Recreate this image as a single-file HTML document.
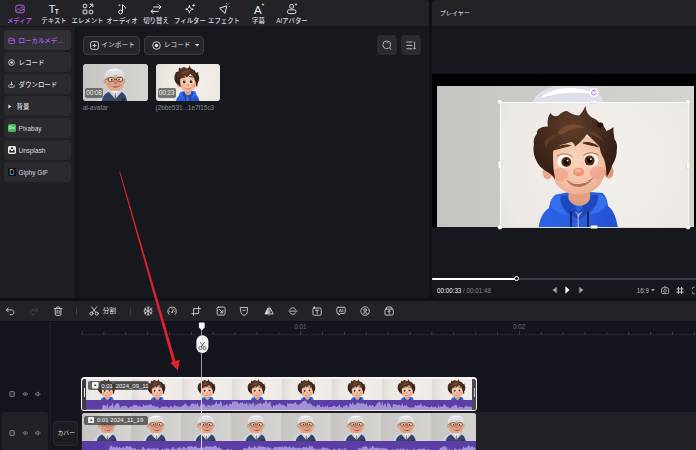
<!DOCTYPE html>
<html lang="ja">
<head>
<meta charset="utf-8">
<title>Video Editor</title>
<style>
*{box-sizing:border-box;margin:0;padding:0}
html,body{width:696px;height:450px;overflow:hidden;background:#111115}
body{position:relative;font-family:"Liberation Sans","Noto Sans CJK JP",sans-serif;color:#e6e6ea;font-size:6.4px;line-height:1}
.abs{position:absolute}
#media{position:absolute;left:0;top:0;width:429px;height:298px;background:#17181d;border-radius:0 4px 4px 0;overflow:hidden}
#player{position:absolute;left:432px;top:0;width:264px;height:298px;background:#17181d;border-radius:4px 0 0 4px;overflow:hidden}
.topbar{position:absolute;left:0;top:0;right:0;height:26px;background:#232327}
.tab{position:absolute;top:0;width:40px;height:26px;text-align:center;color:#dcdce0}
.tab svg{position:absolute;left:14px;top:3px;width:12px;height:12px;overflow:visible}
.tab span{font-weight:500;position:absolute;left:-10px;right:-10px;top:17.7px;font-size:6.4px;white-space:nowrap;letter-spacing:0}
.tab.on span{color:#b65cf2}
#side{position:absolute;left:0;top:26px;width:76.2px;height:272px;background:#1f1f24;border-right:1.5px solid #111115;border-top:1px solid #18181c}
.si{position:absolute;left:4px;width:67px;height:20px;border-radius:4px;background:#2a2a2f;font-size:6.45px;color:#dedee2;white-space:nowrap}
.si span{font-weight:500;position:absolute;left:14.6px;top:8.1px}
.si svg{position:absolute;left:4.3px;top:7.1px;width:7px;height:7px;overflow:visible}
.si.on{background:#313136;color:#b65cf2}
.btn{position:absolute;top:35.5px;height:19.5px;border:1px solid #3a3a40;border-radius:4px;background:#26262a;font-size:6.6px;color:#dedee2}
.sq{position:absolute;top:35px;width:20.5px;height:20px;border-radius:4px;background:#2a2a2f}
.thumb{position:absolute;top:64px;width:64.5px;height:37px;border-radius:3.5px;overflow:hidden;background:#d6d3ce}
.dur{position:absolute;left:2px;bottom:2.6px;width:18px;height:10px;border-radius:1.8px;background:rgba(88,88,88,.8);color:#ececec;font-size:6.5px;text-align:center;line-height:10.4px;letter-spacing:-.2px}
.cap{position:absolute;top:104.6px;font-size:6.4px;color:#8a8a92;white-space:nowrap}
#tbar{position:absolute;left:0;top:301px;width:696px;height:19.8px;background:#232327}
#tl{position:absolute;left:0;top:322px;width:696px;height:128px;background:#15161d;overflow:hidden}
.ti{position:absolute;top:5.1px;width:10.2px;height:10.2px;margin-left:.4px;overflow:visible}
</style>
</head>
<body>

<svg width="0" height="0" style="position:absolute">
<defs>
<radialGradient id="bgB" gradientUnits="userSpaceOnUse" cx="105" cy="60" r="150"><stop offset="0" stop-color="#f3f0ec"/><stop offset="0.7" stop-color="#ece9e4"/><stop offset="1" stop-color="#dedbd6"/></radialGradient>
<linearGradient id="bgO" gradientUnits="userSpaceOnUse" x1="0" x2="188" y1="0" y2="0"><stop offset="0" stop-color="#c6c4c0"/><stop offset="0.5" stop-color="#cfcdc9"/><stop offset="1" stop-color="#d6d4d0"/></linearGradient>
<linearGradient id="hoodG" gradientUnits="userSpaceOnUse" x1="40" x2="118" y1="95" y2="125"><stop offset="0" stop-color="#2c62e6"/><stop offset="0.5" stop-color="#2a5ee0"/><stop offset="1" stop-color="#2250cc"/></linearGradient>
<radialGradient id="skinG" gradientUnits="userSpaceOnUse" cx="76" cy="58" r="40"><stop offset="0" stop-color="#fad4ba"/><stop offset="0.6" stop-color="#f4c2a6"/><stop offset="1" stop-color="#e6a486"/></radialGradient>
<radialGradient id="hairG" gradientUnits="userSpaceOnUse" cx="72" cy="26" r="52"><stop offset="0" stop-color="#623e2a"/><stop offset="0.5" stop-color="#482c1e"/><stop offset="1" stop-color="#341e16"/></radialGradient>
<g id="boy">
  <rect x="-70" y="-20" width="330" height="170" fill="url(#bgB)"/>
  <!-- hoodie body -->
  <path d="M38.500 126 C40 116 43 110 49 106 C50 100 52 95 56 92.500 L70 90 L90 90 L102.500 91 C106 94 107.500 99 108 104 C113 108 116 114 118 126 Z" fill="url(#hoodG)"/>
  <!-- hood inner shadow -->
  <path d="M60 94 C64 92 68 94 70 97 L78.700 111 L88 96.500 C91 93 96 92 100 94 C98 100 94 106 88 111 L79 118 L68 111 C63 106 60 100 60 94 Z" fill="#1d48be"/>
  <path d="M74.500 109 L78.700 115 L83 109 L78.700 111.500 Z" fill="#8c9ebc"/>
  <!-- neck -->
  <path d="M68.500 84 H90 V97 C86 106 73 106 68.500 97 Z" fill="#e2a080"/>
  <!-- hood rim highlights -->
  <path d="M50 101 C52 95 56 92 61 93 C59 100 62 108 68 113 C62 113 54 110 50 101 Z" fill="#3470ee"/>
  <path d="M107 101 C106 95 102 91.500 98 92.500 C99 100 95 107 89 112 C96 112 104 109 107 101 Z" fill="#3470ee"/>
  <!-- ears -->
  <ellipse cx="47.500" cy="71" rx="4.800" ry="6.500" fill="#eaa88a"/>
  <ellipse cx="109" cy="70" rx="4.500" ry="6.500" fill="#e09878"/>
  <!-- face -->
  <path d="M52 52 C52 40 62 34 78 34 C94 34 105.500 40 106 54 C107 64 105 74 101 81 C96 88 88 92.500 78.700 92.500 C69 92.500 61 88 56 82 C52 75 51.500 62 52 52 Z" fill="url(#skinG)"/>
  <ellipse cx="60" cy="72.500" rx="8.500" ry="6.500" fill="#f08878" opacity="0.42"/>
  <ellipse cx="98" cy="71" rx="8.500" ry="6.500" fill="#f08878" opacity="0.42"/>
  <!-- eyes -->
  <ellipse cx="64.700" cy="59.400" rx="7.300" ry="6.800" fill="#fbf7f4"/><ellipse cx="91" cy="58" rx="7.300" ry="6.800" fill="#fbf7f4"/>
  <circle cx="66.300" cy="60" r="5" fill="#5a2c14"/><circle cx="89.600" cy="58.600" r="5" fill="#5a2c14"/>
  <circle cx="66.300" cy="60" r="2.700" fill="#120704"/><circle cx="89.600" cy="58.600" r="2.700" fill="#120704"/>
  <circle cx="67.600" cy="58.600" r="0.900" fill="#fff"/><circle cx="90.900" cy="57.200" r="0.900" fill="#fff"/>
  <path d="M57 54.500 C60 51 69 51 72.500 55" stroke="#8a5a44" stroke-width="0.800" fill="none"/>
  <path d="M83.500 53.500 C87 50 95 50 98.500 53.500" stroke="#8a5a44" stroke-width="0.800" fill="none"/>
  <!-- brows -->
  <path d="M55 47.500 C59 43.500 66 42.500 70.500 43.500 C66 44.500 60 46 55 47.500 Z" fill="#4a2c1a" stroke="#4a2c1a" stroke-width="1.200"/>
  <path d="M83 41 C88 40 94 41.500 98.500 45 C93.500 43.500 88 42.500 83 41 Z" fill="#4a2c1a" stroke="#4a2c1a" stroke-width="1.200"/>
  <!-- nose + mouth -->
  <ellipse cx="78.700" cy="70" rx="5.600" ry="4.300" fill="#ee9478"/>
  <ellipse cx="78" cy="68.600" rx="3" ry="1.800" fill="#f6b49a"/>
  <path d="M66 77.500 C72 82.500 86 82 93.500 75.500 C89 82.500 83 85 78.700 85 C73 85 68.500 82 66 77.500 Z" fill="#c06a58"/>
  <path d="M68.500 79.500 C74 83 85 82.500 91 77.800 C86 81 73 82 68.500 79.500 Z" fill="#fdf6f0"/>
  <!-- hair -->
  <path d="M55 77 C53 73.500 50 71.500 46.500 69.500 C42 67 38 63 36 58 C33.500 53 33 46 34 42 C33 38 35 34 37 31.500 C36 27 42 24 48 24.500 C47 20 48 14 50.500 11 C52 14 55 15 58.500 13.500 C61 11 64 9 67 9 C70 11 74 13.500 79 13.500 C81.500 11.500 84 7.500 85.700 3.400 C85.600 8 87.500 12.500 92 15.500 C96 17 98 19 99.500 21 C102 20 104 21.500 103.500 24 C105 26 106 27.500 106 29 C109 28 112 26.500 113.600 25 C113 29 114 33 114.500 37 C117 40 117.500 44 116.800 48 C117 53 115 59 112 63.500 C111 68 109 72 106.500 75 C106.500 68 105.500 61 104 57 C101 52 100 48 99.500 44.500 C96 41 93.500 38.500 92 37 C90 35 88 33 87 32 C84 36 80 41 75 44.500 C74.500 42 73 40.500 71.500 40 C67 41 63 42.500 60.500 43 C57.500 45 55 47 53 49.500 C53 58 53 68 55 76 Z" fill="url(#hairG)"/>
  <path d="M58 30 C64 22 76 20 86 26 C80 25 72 26 66 30 C62 33 58 34 58 30 Z" fill="#8a5c3c" opacity="0.550"/>
  <path d="M88 30 C94 28 100 32 104 40 C100 36 94 34 88 30 Z" fill="#7a5034" opacity="0.500"/>
  <path d="M44 40 C48 34 54 32 58 34 C52 36 48 40 46 46 Z" fill="#7a5034" opacity="0.450"/>
  <ellipse cx="100" cy="23" rx="3" ry="2.400" fill="#241610"/>
  <!-- strings + zipper -->
  <path d="M71 109.500 V126 M88 109.500 V126" stroke="#1a1a28" stroke-width="1.500"/>
  <path d="M78.200 113 V126" stroke="#b8c2d4" stroke-width="1.100"/>
</g>
<g id="oldman">
  <rect x="-60" y="-30" width="320" height="170" fill="url(#bgO)"/>
  <!-- shirt + vest -->
  <path d="M46 106 C48 92 56 82 70 78 L82 72 L106 72 L118 78 C128 82 132 92 134 106 Z" fill="#cdd4e0"/>
  <path d="M56 106 C58 92 64 84 76 80 L94 100 L112 80 C122 84 126 94 128 106 Z" fill="#36466a"/>
  <path d="M84 74 L94 92 L104 74 Z" fill="#f6f8fb"/>
  <path d="M93 82 L95 82 L96 100 L92 100 Z" fill="#8a5a5a"/>
  <rect x="112" y="98" width="10" height="8" fill="#3a2c24"/>
  <!-- neck -->
  <rect x="82" y="64" width="22" height="12" fill="#d8a488"/>
  <!-- ears -->
  <ellipse cx="65" cy="50" rx="4.500" ry="7" fill="#d89c82"/>
  <ellipse cx="119" cy="49" rx="4" ry="6.500" fill="#d0947a"/>
  <!-- face -->
  <path d="M68 40 C68 22 116 22 118 40 C120 52 119 62 114 69 C108 79 80 79 73 69 C67 62 67 52 68 40 Z" fill="#e0a688"/>
  <ellipse cx="79" cy="57" rx="6.500" ry="4.500" fill="#e48a7a" opacity="0.6"/>
  <ellipse cx="107" cy="56" rx="6.500" ry="4.500" fill="#e48a7a" opacity="0.6"/>
  <!-- hair -->
  <path d="M66 45 C62 34 64 22 74 17 C84 11 106 11 112 17 C120 22 121 34 118 44 C116 36 112 31 104 30 C96 32 86 33 78 31 C72 34 68 39 66 45 Z" fill="#dde0e8"/>
  <path d="M72 22 C82 13 102 13 112 20 C102 17 88 18 72 22 Z" fill="#ffffff"/>
  <!-- glasses -->
  <rect x="74" y="39" width="17" height="11" rx="4" fill="#eccab2" stroke="#2a2420" stroke-width="1.800"/>
  <rect x="98" y="38.500" width="17" height="11" rx="4" fill="#eccab2" stroke="#2a2420" stroke-width="1.800"/>
  <path d="M91 44 H98 M74 43 L66 44" stroke="#2a2420" stroke-width="1.500"/>
  <circle cx="84" cy="45" r="2.400" fill="#3a2a20"/><circle cx="105" cy="44.500" r="2.400" fill="#3a2a20"/>
  <path d="M74 36 C78 32.500 87 32.500 91 36" stroke="#eef0f4" stroke-width="2.800" fill="none"/>
  <path d="M98 35.500 C102 32 111 32 115 35.500" stroke="#eef0f4" stroke-width="2.800" fill="none"/>
  <!-- nose / mouth -->
  <ellipse cx="95" cy="54" rx="6" ry="5" fill="#dc7866"/>
  <path d="M82 62 C88 69 104 69 110 61 C104 65 88 66 82 62 Z" fill="#8a3c30"/>
</g>
</defs>
</svg>

<!-- ================= MEDIA PANEL ================= -->
<div id="media">
  <div class="topbar" id="tabs">
<div class="tab on" style="left:-0.5px"><svg viewBox="0 0 12 12" style="transform:scale(.88);transform-origin:50% 50%"><rect x="1.2" y="1.6" width="9.6" height="8.8" rx="2.2" fill="none" stroke="#b65cf2" stroke-width="1.1"/><circle cx="8" cy="4.3" r="0.9" fill="none" stroke="#b65cf2" stroke-width="0.8"/><path d="M1.6 8.2 L4.6 5.4 L6.6 7.4 M5.2 10 C6 8 8 6.6 10.6 6.4" fill="none" stroke="#b65cf2" stroke-width="1"/></svg><span>メディア</span></div>
<div class="tab" style="left:34px"><svg viewBox="0 0 12 12"><text x="0.6" y="10" font-size="11.5" font-family="Liberation Sans,sans-serif" fill="#e8e8ec">T</text><text x="6.8" y="10.6" font-size="6.6" font-weight="bold" font-family="Liberation Sans,sans-serif" fill="#e8e8ec">T</text></svg><span>テキスト</span></div>
<div class="tab" style="left:67.5px"><svg viewBox="0 0 12 12"><circle cx="3" cy="3" r="1.9" fill="none" stroke="#e8e8ec" stroke-width="1"/><rect x="1.1" y="7" width="3.8" height="3.8" rx="0.6" fill="none" stroke="#e8e8ec" stroke-width="1"/><circle cx="9" cy="9" r="1.9" fill="none" stroke="#e8e8ec" stroke-width="1"/><path d="M7 5 L10.6 1.4 M7.8 1.2 H10.8 V4.2" fill="none" stroke="#e8e8ec" stroke-width="1"/></svg><span>エレメント</span></div>
<div class="tab" style="left:102px"><svg viewBox="0 0 12 12"><circle cx="4.6" cy="9" r="1.9" fill="none" stroke="#e8e8ec" stroke-width="1"/><path d="M6.5 9 V1.6 C7.2 3 9.6 3 9.4 5.6" fill="none" stroke="#e8e8ec" stroke-width="1"/><path d="M3.4 1.2 v2 M2.4 2.2 h2" stroke="#e8e8ec" stroke-width="0.6"/></svg><span>オーディオ</span></div>
<div class="tab" style="left:136px"><svg viewBox="0 0 12 12"><path d="M3.4 4 H10.8 M8.6 1.6 L11 4 L8.6 6.2" fill="none" stroke="#e8e8ec" stroke-width="1"/><path d="M8.6 8.4 H1.2 M3.4 6.2 L1 8.4 L3.4 10.8" fill="none" stroke="#e8e8ec" stroke-width="1"/></svg><span>切り替え</span></div>
<div class="tab" style="left:170px"><svg viewBox="0 0 12 12"><path d="M5.4 2.4 C5.8 5 6.6 5.8 9.2 6.2 C6.6 6.6 5.8 7.4 5.4 10.2 C5 7.4 4.2 6.6 1.6 6.2 C4.2 5.8 5 5 5.4 2.4 Z" fill="none" stroke="#e8e8ec" stroke-width="0.95" stroke-linejoin="round"/><path d="M9.6 0.6 C9.8 1.8 10.2 2.2 11.4 2.4 C10.2 2.6 9.8 3 9.6 4.2 C9.4 3 9 2.6 7.8 2.4 C9 2.2 9.4 1.8 9.6 0.6 Z" fill="#e8e8ec"/></svg><span>フィルター</span></div>
<div class="tab" style="left:204px"><svg viewBox="0 0 12 12"><path d="M1.6 5.2 L8.8 2.8 L7 10.4 Z" fill="none" stroke="#e8e8ec" stroke-width="1" stroke-linejoin="round"/><path d="M10.2 1.4 l0.6 -0.8 M10.8 3.6 l1 0 M8.4 0.8 l0 -0.8" stroke="#e8e8ec" stroke-width="0.7"/></svg><span>エフェクト</span></div>
<div class="tab" style="left:238.5px"><svg viewBox="0 0 12 12"><text x="1" y="10.6" font-size="11.5" font-family="Liberation Sans,sans-serif" fill="#e8e8ec">A</text><path d="M10 0.4 v2.4 M8.8 1.6 h2.4" stroke="#e8e8ec" stroke-width="0.7"/></svg><span>字幕</span></div>
<div class="tab" style="left:272px"><svg viewBox="0 0 12 12"><circle cx="5.6" cy="3.4" r="2" fill="none" stroke="#e8e8ec" stroke-width="1"/><rect x="1.4" y="6.8" width="8.6" height="3.8" rx="1.9" fill="none" stroke="#e8e8ec" stroke-width="1"/><path d="M10 0.2 v2.4 M8.8 1.4 h2.4" stroke="#e8e8ec" stroke-width="0.7"/></svg><span>AIアバター</span></div>
</div>
  <div id="side">
<div class="si on" style="top:2.7px"><svg viewBox="0 0 8 8"><path d="M1 2.2 C1 1.5 1.4 1.2 2 1.2 H3.6 L4.4 2.2 H6.6 C7.2 2.2 7.6 2.6 7.6 3.2 V6.4 C7.6 7 7.2 7.4 6.6 7.4 H2 C1.4 7.4 1 7 1 6.4 Z M1 3.8 H7.6" fill="none" stroke="#b65cf2" stroke-width="0.9"/></svg><span>ローカルメデ…</span></div>
<div class="si" style="top:24.7px"><svg viewBox="0 0 8 8"><circle cx="4" cy="4" r="3.3" fill="none" stroke="#e2e2e6" stroke-width="0.9"/><circle cx="4" cy="4" r="1.5" fill="#e2e2e6"/></svg><span>レコード</span></div>
<div class="si" style="top:46.7px"><svg viewBox="0 0 8 8"><path d="M4 0.8 V4.8 M2.4 3.4 L4 5 L5.6 3.4" fill="none" stroke="#e2e2e6" stroke-width="0.9"/><path d="M0.9 4.4 V6 C0.9 6.8 1.4 7.2 2.1 7.2 H5.9 C6.6 7.2 7.1 6.8 7.1 6 V4.4" fill="none" stroke="#e2e2e6" stroke-width="0.9"/></svg><span>ダウンロード</span></div>
<div class="si" style="top:68.7px"><svg viewBox="0 0 8 8" style="left:3.4px;top:7.2px"><path d="M1.6 1.6 L5 4 L1.6 6.4 Z" fill="#e2e2e6"/></svg><span style="left:12.5px">背景</span></div>
<div class="si" style="top:90.7px"><svg viewBox="0 0 8 8" style="left:3.9px;top:6.7px;width:8px;height:8px"><rect x="0" y="0" width="8" height="8" rx="1.6" fill="#48b85a"/><path d="M1.6 5.6 V2.6 H3.2 C4.2 2.6 4.2 4.4 3.2 4.4 H1.6 M4.6 2.6 L6.6 5.2 M6.6 2.6 L4.6 5.2" fill="none" stroke="#d8f5dc" stroke-width="0.7"/></svg><span>Pixabay</span></div>
<div class="si" style="top:112.7px"><svg viewBox="0 0 8 8" style="left:3.9px;top:6.7px;width:8px;height:8px"><rect x="0" y="0" width="8" height="8" rx="1.8" fill="#f2f2f2"/><path d="M2.8 1.6 H5.2 V3 H2.8 Z M1.4 3.8 H2.8 V5 H5.2 V3.8 H6.6 V6.6 H1.4 Z" fill="#18181c"/></svg><span>Unsplash</span></div>
<div class="si" style="top:134.7px"><svg viewBox="0 0 8 8" style="left:3.9px;top:6.7px;width:8px;height:8px"><rect x="0" y="0" width="8" height="8" rx="1.6" fill="#0c0c0e"/><path d="M2.2 1.6 V6.4" stroke="#28e08a" stroke-width="0.9"/><path d="M2.2 1.6 H4.6" stroke="#ffe14a" stroke-width="0.9"/><path d="M4.6 1.6 L5.8 3" stroke="#ff6666" stroke-width="0.9"/><path d="M5.8 3 V6.4" stroke="#a050ff" stroke-width="0.9"/><path d="M2.2 6.4 H5.8" stroke="#30b0ff" stroke-width="0.9"/></svg><span>Giphy GIF</span></div>
</div>
  <div id="content">
<div class="btn" style="left:83px;width:56.5px"><svg class="abs" style="left:6px;top:4.5px;width:9px;height:9px" viewBox="0 0 9 9"><rect x="0.6" y="0.6" width="7.8" height="7.8" rx="1.8" fill="none" stroke="#dedee2" stroke-width="0.9"/><path d="M4.5 2.6 V6.4 M2.6 4.5 H6.4" stroke="#dedee2" stroke-width="0.9"/></svg><span class="abs" style="left:17.3px;top:5.8px;font-size:6.75px">インポート</span></div>
<div class="btn" style="left:144.2px;width:60.3px"><svg class="abs" style="left:6.5px;top:4.5px;width:9px;height:9px" viewBox="0 0 9 9"><circle cx="4.5" cy="4.5" r="3.8" fill="none" stroke="#dedee2" stroke-width="0.9"/><circle cx="4.5" cy="4.5" r="1.7" fill="#dedee2"/></svg><span class="abs" style="left:18.8px;top:5.8px">レコード</span><svg class="abs" style="left:49.7px;top:7.7px;width:4.2px;height:2.6px" viewBox="0 0 5 3"><path d="M0 0 H5 L2.5 3 Z" fill="#dedee2"/></svg></div>
<div class="sq" style="left:376.5px"><svg class="abs" style="left:5px;top:5px;width:10px;height:10px" viewBox="0 0 10 10"><circle cx="4.8" cy="4.8" r="3.9" fill="none" stroke="#c8c8ce" stroke-width="0.8"/><path d="M7.4 7.6 L9.2 9.6" stroke="#c8c8ce" stroke-width="0.9"/><path d="M6.6 3.6 A2.4 2.4 0 0 0 4.4 2.4" fill="none" stroke="#c8c8ce" stroke-width="0.6"/></svg></div>
<div class="sq" style="left:400.5px"><svg class="abs" style="left:5.5px;top:5.5px;width:10px;height:9px" viewBox="0 0 10 9"><path d="M0.4 1 H6.4 M0.4 4.4 H6.4 M0.4 7.8 H6.4" stroke="#c8c8ce" stroke-width="0.9"/><path d="M8.6 0.6 V8 M7.4 6.8 L8.6 8.2 L9.8 6.8" fill="none" stroke="#c8c8ce" stroke-width="0.8"/></svg></div>
<div class="thumb" style="left:83px"><svg class="abs" style="left:0;top:0" width="64.5" height="37" viewBox="0 0 188 106" preserveAspectRatio="xMidYMid slice"><use href="#oldman"/></svg><div class="dur">00:08</div></div>
<div class="thumb" style="left:155.5px"><svg class="abs" style="left:0;top:0" width="64.5" height="37" viewBox="-29.5 -1 219.3 124.7" preserveAspectRatio="xMidYMid slice"><use href="#boy"/></svg><div class="dur">00:23</div></div>
<div class="cap" style="left:83px">ai-avatar</div>
<div class="cap" style="left:155.5px">(2bbe531...1e7f15c3</div>
</div>
</div>

<!-- ================= PLAYER PANEL ================= -->
<div id="player">
  <div class="topbar"><span class="abs" style="left:7.7px;top:9.6px;font-size:6.1px;color:#e2e2e6">プレイヤー</span></div>
  <div id="stage">
<div class="abs" style="left:0;top:74px;width:264px;height:153px;background:#000"></div>
<svg class="abs" style="left:5.3px;top:85.7px" width="256.4" height="141.3" viewBox="-4 13.5 188 103.6" preserveAspectRatio="xMidYMid slice"><use href="#oldman"/></svg>
<svg class="abs" style="left:68px;top:102px" width="188" height="125" viewBox="0 0 188 125"><use href="#boy"/></svg>
<div class="abs" style="left:67.5px;top:101.5px;width:189px;height:126px;border:1px solid rgba(255,255,255,.85)"></div>
<svg class="abs" style="left:0;top:0;overflow:visible" width="264" height="298" viewBox="0 0 264 298">
  <g fill="#fff" stroke="#b8b8b8" stroke-width="0.4">
    <circle cx="68" cy="102" r="2.3"/><circle cx="256" cy="102" r="2.3"/><circle cx="68" cy="227" r="2.3"/><circle cx="256" cy="227" r="2.3"/>
    <rect x="158.500" y="100.600" width="7" height="2.800" rx="1"/><rect x="158.500" y="225.600" width="7" height="2.800" rx="1"/>
    <rect x="66.300" y="161" width="3.400" height="7.400" rx="1"/><rect x="254.300" y="161" width="3.400" height="7.400" rx="1"/>
  </g>
  <circle cx="162" cy="92.600" r="4.600" fill="#fff"/>
  <path d="M164.200 92.700 A2.300 2.300 0 1 1 162.600 90.500" fill="none" stroke="#b65cf2" stroke-width="0.9"/>
  <path d="M161.600 89.300 L163.600 90.500 L162 92" fill="none" stroke="#b65cf2" stroke-width="0.8"/>
</svg>
</div>
  <div id="controls">
<div class="abs" style="left:0;top:277.5px;width:264px;height:2px;background:#3a3a42"></div>
<div class="abs" style="left:0;top:277.5px;width:84px;height:2px;background:#fff;border-radius:1px"></div>
<div class="abs" style="left:81.600px;top:276px;width:5px;height:5px;border-radius:50%;background:#17181d;border:1px solid #fff"></div>
<span class="abs" style="left:5px;top:288.300px;font-size:6.250px;color:#f0f0f4;white-space:nowrap;transform:scaleY(1.18);transform-origin:0 50%">00:00:33 <span style="color:#85858e">/ 00:01:48</span></span>
<svg class="abs" style="left:118px;top:285px;overflow:visible" width="36" height="10" viewBox="0 0 36 10">
  <path d="M6.200 2.200 L2.600 5 L6.200 7.800 Z" fill="#b0b0b8"/><rect x="5.600" y="2.200" width="1.600" height="5.600" fill="#74747c"/>
  <path d="M15.400 1.200 L19.600 5 L15.400 8.800 Z" fill="#f4f4f8"/>
  <path d="M29.800 2.200 L33.400 5 L29.800 7.800 Z" fill="#b0b0b8"/><rect x="28.800" y="2.200" width="1.600" height="5.600" fill="#74747c"/>
</svg>
<span class="abs" style="left:204.800px;top:288px;font-size:6.200px;color:#b8b8c0;transform:scaleY(1.18);transform-origin:0 50%">16:9</span>
<svg class="abs" style="left:218.600px;top:289.300px" width="4" height="2.600" viewBox="0 0 4 2.600"><path d="M0 0 H4 L2 2.600 Z" fill="#a0a0a8"/></svg>
<svg class="abs" style="left:229px;top:285.500px;overflow:visible" width="36" height="9" viewBox="0 0 36 9">
  <rect x="0.600" y="1.800" width="7" height="5.800" rx="1.200" fill="none" stroke="#b8b8c0" stroke-width="0.9"/><circle cx="4.100" cy="4.800" r="1.400" fill="none" stroke="#b8b8c0" stroke-width="0.8"/><path d="M2.800 1.600 L3.400 0.700 H4.800 L5.400 1.600" fill="none" stroke="#b8b8c0" stroke-width="0.7"/>
  <path d="M17.400 1 V8 M20.600 1 V8 M15.600 2.900 H22.400 M15.600 6.100 H22.400" stroke="#c8c8d0" stroke-width="1"/>
  <path d="M31.400 3.200 V2.400 C31.400 1.600 31.800 1.200 32.600 1.200 H33.600 M31.400 5.800 V6.600 C31.400 7.400 31.800 7.800 32.600 7.800 H33.600" fill="none" stroke="#b8b8c0" stroke-width="0.9"/>
</svg>
</div>
</div>

<!-- ================= TIMELINE TOOLBAR ================= -->
<div id="tbar">
<svg class="ti" style="left:5.1px" viewBox="0 0 11 11" fill="none" stroke="#dcdce2" stroke-width="0.9" stroke-linecap="round" stroke-linejoin="round"><path d="M3.6 2 L1.4 4.200 L3.600 6.400 M1.600 4.200 H6.800 C8.600 4.200 9.600 5.400 9.600 6.800 C9.600 8.200 8.600 9.400 6.800 9.400 H5.400"/></svg>
<svg class="ti" style="left:28.5px" viewBox="0 0 11 11" fill="none" stroke="#4c4c54" stroke-width="0.9" stroke-linecap="round" stroke-linejoin="round"><path d="M7.400 2 L9.600 4.200 L7.400 6.400 M9.400 4.200 H4.200 C2.400 4.200 1.400 5.400 1.400 6.800 C1.400 8.200 2.400 9.400 4.200 9.400 H5.600"/></svg>
<svg class="ti" style="left:52.8px" viewBox="0 0 11 11" fill="none" stroke="#dcdce2" stroke-width="0.9" stroke-linecap="round" stroke-linejoin="round"><path d="M1.400 2.800 H9.600 M4 2.600 V1.600 C4 1.200 4.200 1 4.600 1 H6.400 C6.800 1 7 1.200 7 1.600 V2.600 M2.400 3 V8.600 C2.400 9.600 3 10.200 4 10.200 H7 C8 10.200 8.600 9.600 8.600 8.600 V3 M4.400 4.800 V8 M6.600 4.800 V8"/></svg>
<div class="abs" style="left:75.700px;top:6.500px;width:0.800px;height:7.500px;background:#3e3e46"></div>
<svg class="ti" style="left:88.5px" viewBox="0 0 11 11" fill="none" stroke="#dcdce2" stroke-width="0.9" stroke-linecap="round" stroke-linejoin="round"><circle cx="2.600" cy="8.200" r="1.700"/><circle cx="8.400" cy="8.200" r="1.700"/><path d="M3.600 6.800 L8.200 1 M7.400 6.800 L2.800 1"/></svg>
<span class="abs" style="left:102.800px;top:7px;font-size:6.600px;color:#e6e6ea;white-space:nowrap">分割</span>
<div class="abs" style="left:130.400px;top:6.500px;width:0.800px;height:7.500px;background:#3e3e46"></div>
<svg class="ti" style="left:142.5px" viewBox="0 0 11 11" fill="none" stroke="#dcdce2" stroke-width="0.9" stroke-linecap="round" stroke-linejoin="round"><path d="M5.500 0.800 V10.200 M1.400 3.100 L9.600 7.900 M9.600 3.100 L1.400 7.900 M4.200 1.400 L5.500 2.600 L6.800 1.400 M4.200 9.600 L5.500 8.400 L6.800 9.600 M1.300 4.900 L2.900 4 L2.500 2.300 M9.700 6.100 L8.100 7 L8.500 8.700 M9.700 4.900 L8.100 4 L8.500 2.300 M1.300 6.100 L2.900 7 L2.500 8.700"/></svg>
<svg class="ti" style="left:166.9px" viewBox="0 0 11 11" fill="none" stroke="#dcdce2" stroke-width="0.9" stroke-linecap="round" stroke-linejoin="round"><path d="M2.200 9 A4.600 4.600 0 1 1 8.800 9"/><path d="M5.500 6.600 L7.400 3.800"/><circle cx="5.500" cy="6.800" r="0.900" fill="#dcdce2" stroke="none"/><path d="M2.400 6 h0.600 M8 6 h0.600 M5.500 2.600 v0.600" stroke-width="0.700"/></svg>
<svg class="ti" style="left:191px" viewBox="0 0 11 11" fill="none" stroke="#dcdce2" stroke-width="0.9" stroke-linecap="round" stroke-linejoin="round"><path d="M8.200 0.800 V8.200 H0.800 M10.200 2.800 H2.800 V10.200"/></svg>
<svg class="ti" style="left:215.2px" viewBox="0 0 11 11" fill="none" stroke="#dcdce2" stroke-width="0.9" stroke-linecap="round" stroke-linejoin="round"><rect x="1.200" y="1.200" width="8.600" height="8.600" rx="1.400"/><path d="M3.400 3.400 L7.200 7.200 M7.400 4.600 V7.400 H4.600"/></svg>
<svg class="ti" style="left:239px" viewBox="0 0 11 11" fill="none" stroke="#dcdce2" stroke-width="0.9" stroke-linecap="round" stroke-linejoin="round"><path d="M1.800 1.600 H9.200 V6 C9.200 8 7.400 9.400 5.500 10.200 C3.600 9.400 1.800 8 1.800 6 Z"/><path d="M4.200 4.600 H6.800" /></svg>
<svg class="ti" style="left:263.5px" viewBox="0 0 11 11" fill="none" stroke="#dcdce2" stroke-width="0.9" stroke-linecap="round" stroke-linejoin="round"><path d="M5.500 0.800 V10.200" stroke-width="0.700"/><path d="M4.200 2.400 L1 8.600 H4.200 Z" fill="#dcdce2"/><path d="M6.800 2.400 L10 8.600 H6.800 Z"/></svg>
<svg class="ti" style="left:287.5px" viewBox="0 0 11 11" fill="none" stroke="#dcdce2" stroke-width="0.9" stroke-linecap="round" stroke-linejoin="round"><path d="M1 5.500 H10"/><path d="M2.200 3.600 C2.600 1.400 7.400 1.400 8.200 3.600 M2.200 7.400 C2.600 9.600 7.400 9.600 8.200 7.400"/></svg>
<svg class="ti" style="left:311.7px" viewBox="0 0 11 11" fill="none" stroke="#dcdce2" stroke-width="0.9" stroke-linecap="round" stroke-linejoin="round"><rect x="1" y="2.200" width="9" height="7.800" rx="1.400"/><path d="M3.800 4.600 H7.200 M5.500 4.600 V8"/><path d="M2.400 0.800 v1.600 M1.600 1.600 h1.600" stroke-width="0.600"/></svg>
<svg class="ti" style="left:335.9px" viewBox="0 0 11 11" fill="none" stroke="#dcdce2" stroke-width="0.9" stroke-linecap="round" stroke-linejoin="round"><path d="M2.200 1.400 H8.800 C9.600 1.400 10 1.800 10 2.600 V6.800 C10 7.600 9.600 8 8.800 8 H5 L3 9.800 V8 H2.200 C1.400 8 1 7.600 1 6.800 V2.600 C1 1.800 1.400 1.400 2.200 1.400 Z"/><path d="M3.600 6.200 L4.800 3.200 L6 6.200 M4 5.400 H5.600 M7.400 3.200 V6.200" stroke-width="0.700"/></svg>
<svg class="ti" style="left:360px" viewBox="0 0 11 11" fill="none" stroke="#dcdce2" stroke-width="0.9" stroke-linecap="round" stroke-linejoin="round"><circle cx="5.500" cy="5.500" r="4.600" stroke-dasharray="1.600 1"/><circle cx="5.500" cy="4.400" r="1.500"/><path d="M2.800 8.600 C3.400 6.800 7.600 6.800 8.200 8.600"/></svg>
<svg class="ti" style="left:383.8px" viewBox="0 0 11 11" fill="none" stroke="#dcdce2" stroke-width="0.9" stroke-linecap="round" stroke-linejoin="round"><path d="M2.400 3.200 V2.200 C2.400 1.600 2.800 1.200 3.400 1.200 H7.600 C8.200 1.200 8.600 1.600 8.600 2.200 V3.200"/><rect x="1" y="3.400" width="9" height="6.400" rx="1.200"/><path d="M5.500 8.400 V5 M4.200 6.200 L5.500 4.900 L6.800 6.200"/></svg>
</div>

<!-- ================= TIMELINE ================= -->
<div id="tl">
<div class="abs" style="left:49.200px;top:0;width:2px;height:128px;background:#1a1b24"></div>
<div class="abs" style="left:81px;top:90px;width:615px;height:38px;background:#222226"></div>
<div class="abs" style="left:2px;top:90px;width:46px;height:40px;background:#222226;border-radius:3px"></div>
<svg class="abs" style="left:0;top:0" width="696" height="20" viewBox="0 0 696 20"><path d="M81.500 12.800 H696" stroke="#2c2c32" stroke-width="0.800"/><path d="M82.00 8.8 V13 M103.87 9.8 V13 M125.74 9.8 V13 M147.61 9.8 V13 M169.48 9.8 V13 M191.35 9.8 V13 M213.22 9.8 V13 M235.09 9.8 V13 M256.96 9.8 V13 M278.83 9.8 V13 M300.70 8.8 V13 M322.57 9.8 V13 M344.44 9.8 V13 M366.31 9.8 V13 M388.18 9.8 V13 M410.05 9.8 V13 M431.92 9.8 V13 M453.79 9.8 V13 M475.66 9.8 V13 M497.53 9.8 V13 M519.40 8.8 V13 M541.27 9.8 V13 M563.14 9.8 V13 M585.01 9.8 V13 M606.88 9.8 V13 M628.75 9.8 V13 M650.62 9.8 V13 M672.49 9.8 V13 M694.36 9.8 V13" stroke="#41414b" stroke-width="0.900"/></svg>
<span class="abs" style="left:294.300px;top:1.600px;font-size:6.300px;color:#696971">0:01</span>
<span class="abs" style="left:513px;top:1.600px;font-size:6.300px;color:#696971">0:02</span>
<svg class="abs" style="left:7px;top:67.7px;overflow:visible" width="36" height="8" viewBox="0 0 36 8" fill="none" stroke="#8c8c94" stroke-width="0.800"><rect x="2.800" y="1.500" width="4.600" height="5" rx="1"/><path d="M3.900 1.500 V6.500 M6.300 1.500 V6.500" stroke-width="0.500"/><path d="M15.800 4 C16.900 2.300 19.700 2.300 20.800 4 C19.700 5.700 16.900 5.700 15.800 4 Z"/><circle cx="18.300" cy="4" r="0.800" fill="#8c8c94" stroke="none"/><path d="M28.800 3.100 H29.900 L31.300 1.900 V6.100 L29.900 4.900 H28.800 Z"/><path d="M32.400 2.800 C33.100 3.500 33.100 4.500 32.400 5.200"/></svg>
<svg class="abs" style="left:7px;top:106.8px;overflow:visible" width="36" height="8" viewBox="0 0 36 8" fill="none" stroke="#8c8c94" stroke-width="0.800"><rect x="2.800" y="1.500" width="4.600" height="5" rx="1"/><path d="M3.900 1.500 V6.500 M6.300 1.500 V6.500" stroke-width="0.500"/><path d="M15.800 4 C16.900 2.300 19.700 2.300 20.800 4 C19.700 5.700 16.900 5.700 15.800 4 Z"/><circle cx="18.300" cy="4" r="0.800" fill="#8c8c94" stroke="none"/><path d="M28.800 3.100 H29.900 L31.300 1.900 V6.100 L29.900 4.900 H28.800 Z"/><path d="M32.400 2.800 C33.100 3.500 33.100 4.500 32.400 5.200"/></svg>
<div class="abs" style="left:53.400px;top:99px;width:24.600px;height:24.600px;border-radius:4px;background:#1d1d21;border:1px solid #29292e"><span class="abs" style="left:3px;top:8.500px;font-size:5.900px;color:#e6e6ea;white-space:nowrap">カバー</span></div>
<div class="abs" style="left:81.3px;top:55.300px;width:395.7px;height:33.900px;border-radius:3.500px;background:#f4f4f4;overflow:hidden"><div class="abs" style="left:1.200px;top:1.300px;right:1.200px;bottom:1.200px;border-radius:2.500px;overflow:hidden;background:#ece9e4"><svg class="abs" style="left:0.00px;top:0" width="50.16" height="22" viewBox="-41 3.500 238 105.400" preserveAspectRatio="xMidYMid slice"><use href="#boy"/></svg><svg class="abs" style="left:49.86px;top:0" width="50.16" height="22" viewBox="-41 3.500 238 105.400" preserveAspectRatio="xMidYMid slice"><use href="#boy"/></svg><svg class="abs" style="left:99.72px;top:0" width="50.16" height="22" viewBox="-41 3.500 238 105.400" preserveAspectRatio="xMidYMid slice"><use href="#boy"/></svg><svg class="abs" style="left:149.58px;top:0" width="50.16" height="22" viewBox="-41 3.500 238 105.400" preserveAspectRatio="xMidYMid slice"><use href="#boy"/></svg><svg class="abs" style="left:199.44px;top:0" width="50.16" height="22" viewBox="-41 3.500 238 105.400" preserveAspectRatio="xMidYMid slice"><use href="#boy"/></svg><svg class="abs" style="left:249.30px;top:0" width="50.16" height="22" viewBox="-41 3.500 238 105.400" preserveAspectRatio="xMidYMid slice"><use href="#boy"/></svg><svg class="abs" style="left:299.16px;top:0" width="50.16" height="22" viewBox="-41 3.500 238 105.400" preserveAspectRatio="xMidYMid slice"><use href="#boy"/></svg><svg class="abs" style="left:349.02px;top:0" width="50.16" height="22" viewBox="-41 3.500 238 105.400" preserveAspectRatio="xMidYMid slice"><use href="#boy"/></svg><svg class="abs" style="left:0;top:21.500px" width="395.7" height="10" viewBox="0 0 395.7 10" preserveAspectRatio="none"><rect width="395.7" height="10" fill="#5a3ea6"/><path d="M0.0,10.0 L0.0,9.6 L1.1,9.6 L2.2,9.6 L3.3,9.6 L4.4,9.6 L5.5,9.6 L6.6,9.6 L7.7,9.6 L8.8,9.6 L9.9,9.6 L11.0,9.6 L12.1,9.6 L13.2,9.6 L14.3,9.6 L15.4,9.6 L16.5,9.6 L17.6,9.6 L18.7,9.6 L19.8,9.6 L20.9,4.4 L22.0,5.3 L23.1,5.1 L24.2,7.1 L25.3,2.8 L26.4,8.4 L27.5,6.5 L28.6,5.1 L29.7,5.7 L30.8,2.3 L31.9,8.1 L33.0,5.1 L34.1,4.5 L35.2,2.9 L36.3,3.2 L37.4,5.4 L38.5,8.1 L39.6,6.1 L40.7,5.9 L41.8,6.8 L42.9,5.2 L44.0,6.3 L45.1,6.6 L46.2,8.4 L47.3,7.1 L48.4,6.8 L49.5,6.8 L50.6,5.8 L51.7,5.4 L52.8,4.6 L53.9,5.3 L55.0,5.0 L56.1,7.2 L57.2,5.4 L58.3,6.4 L59.4,6.8 L60.5,6.8 L61.6,4.1 L62.7,6.1 L63.8,5.6 L64.9,5.0 L66.0,5.7 L67.1,4.4 L68.2,4.6 L69.3,4.3 L70.4,6.2 L71.5,5.4 L72.6,6.5 L73.7,6.6 L74.8,6.7 L75.9,6.5 L77.0,8.1 L78.1,8.4 L79.2,6.4 L80.3,7.0 L81.4,6.6 L82.5,6.7 L83.6,6.0 L84.7,7.2 L85.8,6.6 L86.9,7.9 L88.0,6.4 L89.1,5.5 L90.2,7.2 L91.3,7.4 L92.4,4.6 L93.5,6.1 L94.6,6.1 L95.7,7.1 L96.8,6.0 L97.9,7.5 L99.0,6.4 L100.1,5.9 L101.2,5.7 L102.3,4.0 L103.4,3.1 L104.5,5.4 L105.6,5.6 L106.7,7.1 L107.8,6.1 L108.9,4.8 L110.0,3.2 L111.1,3.4 L112.2,4.5 L113.3,3.6 L114.4,4.7 L115.5,2.6 L116.6,5.8 L117.7,6.9 L118.8,3.8 L119.9,5.8 L121.0,3.1 L122.1,4.3 L123.2,4.9 L124.3,7.5 L125.4,5.0 L126.5,4.7 L127.6,5.4 L128.7,5.4 L129.8,5.7 L130.9,4.3 L132.0,5.0 L133.1,3.8 L134.2,0.8 L135.3,4.2 L136.4,3.7 L137.5,4.3 L138.6,0.7 L139.7,2.7 L140.8,7.4 L141.9,3.9 L143.0,5.8 L144.1,4.4 L145.2,3.5 L146.3,7.0 L147.4,3.4 L148.5,3.4 L149.6,5.1 L150.7,1.1 L151.8,2.0 L152.9,1.0 L154.0,2.6 L155.1,1.1 L156.2,3.5 L157.3,3.9 L158.4,2.1 L159.5,3.5 L160.6,1.9 L161.7,4.1 L162.8,3.5 L163.9,4.1 L165.0,2.6 L166.1,5.8 L167.2,2.9 L168.3,3.5 L169.4,5.0 L170.5,2.8 L171.6,2.7 L172.7,7.0 L173.8,3.2 L174.9,5.3 L176.0,3.1 L177.1,3.9 L178.2,2.4 L179.3,3.8 L180.4,4.5 L181.5,2.8 L182.6,3.2 L183.7,0.3 L184.8,1.2 L185.9,4.3 L187.0,2.5 L188.1,0.9 L189.2,5.7 L190.3,7.9 L191.4,4.8 L192.5,5.9 L193.6,5.4 L194.7,3.7 L195.8,5.5 L196.9,3.6 L198.0,2.9 L199.1,4.9 L200.2,4.4 L201.3,4.8 L202.4,5.5 L203.5,6.2 L204.6,6.9 L205.7,2.0 L206.8,4.6 L207.9,2.9 L209.0,3.9 L210.1,3.5 L211.2,3.7 L212.3,3.2 L213.4,1.8 L214.5,3.9 L215.6,4.9 L216.7,4.4 L217.8,4.5 L218.9,3.3 L220.0,2.4 L221.1,1.0 L222.2,1.3 L223.3,0.3 L224.4,1.2 L225.5,4.0 L226.6,3.6 L227.7,3.6 L228.8,3.2 L229.9,5.0 L231.0,6.6 L232.1,5.6 L233.2,7.6 L234.3,6.5 L235.4,4.5 L236.5,5.6 L237.6,4.6 L238.7,7.2 L239.8,7.1 L240.9,5.5 L242.0,7.8 L243.1,6.1 L244.2,7.1 L245.3,5.1 L246.4,7.8 L247.5,6.7 L248.6,6.9 L249.7,7.1 L250.8,5.7 L251.9,6.3 L253.0,5.5 L254.1,6.9 L255.2,6.4 L256.3,6.3 L257.4,3.9 L258.5,6.9 L259.6,7.2 L260.7,8.1 L261.8,5.6 L262.9,6.2 L264.0,5.2 L265.1,4.8 L266.2,8.1 L267.3,4.5 L268.4,3.1 L269.5,5.2 L270.6,1.7 L271.7,4.4 L272.8,5.1 L273.9,4.3 L275.0,3.3 L276.1,2.3 L277.2,3.4 L278.3,3.8 L279.4,2.9 L280.5,3.8 L281.6,2.8 L282.7,4.9 L283.8,3.7 L284.9,3.5 L286.0,7.1 L287.1,5.5 L288.2,4.4 L289.3,6.6 L290.4,5.0 L291.5,5.4 L292.6,7.4 L293.7,5.5 L294.8,4.2 L295.9,2.8 L297.0,2.1 L298.1,1.4 L299.2,6.1 L300.3,0.6 L301.4,6.5 L302.5,3.4 L303.6,3.5 L304.7,7.5 L305.8,1.7 L306.9,3.8 L308.0,3.9 L309.1,6.9 L310.2,7.8 L311.3,3.6 L312.4,4.6 L313.5,4.0 L314.6,5.2 L315.7,4.9 L316.8,5.1 L317.9,4.5 L319.0,6.7 L320.1,2.7 L321.2,6.5 L322.3,5.2 L323.4,6.1 L324.5,4.3 L325.6,6.7 L326.7,6.8 L327.8,8.2 L328.9,7.0 L330.0,7.7 L331.1,7.3 L332.2,7.3 L333.3,5.0 L334.4,6.0 L335.5,5.5 L336.6,4.7 L337.7,5.7 L338.8,3.2 L339.9,5.6 L341.0,6.8 L342.1,5.1 L343.2,6.2 L344.3,6.9 L345.4,6.0 L346.5,7.5 L347.6,7.0 L348.7,7.0 L349.8,5.8 L350.9,7.3 L352.0,7.4 L353.1,6.1 L354.2,7.0 L355.3,8.4 L356.4,4.5 L357.5,7.8 L358.6,6.2 L359.7,6.5 L360.8,6.8 L361.9,4.2 L363.0,4.6 L364.1,6.3 L365.2,7.1 L366.3,6.7 L367.4,8.5 L368.5,8.1 L369.6,7.0 L370.7,6.6 L371.8,5.5 L372.9,5.3 L374.0,4.5 L375.1,6.2 L376.2,8.6 L377.3,6.6 L378.4,6.7 L379.5,7.3 L380.6,7.1 L381.7,8.7 L382.8,6.5 L383.9,6.7 L385.0,5.7 L386.1,6.7 L387.2,6.5 L388.3,6.6 L389.4,6.9 L390.5,8.0 L391.6,6.5 L392.7,7.8 L393.8,7.5 L394.9,7.1 L395.7,10.0 Z" fill="#a492d6"/></svg><div class="abs" style="left:5.200px;top:2.300px;width:61.500px;height:9px;border-radius:2px;background:rgba(66,66,68,.78)"><svg class="abs" style="left:4.300px;top:1.300px" width="6.600" height="6.400" viewBox="0 0 6.600 6.400"><rect width="6.600" height="6.400" rx="1.500" fill="#f2f2f2"/><path d="M2.500 1.900 L4.700 3.200 L2.500 4.500 Z" fill="#333"/></svg><span class="abs" style="left:13.500px;top:1.700px;font-size:6px;color:#f2f2f4;white-space:nowrap">0:01</span><span class="abs" style="left:26.500px;top:0.700px;height:7.600px;width:34px;border-radius:1.500px;background:rgba(40,40,42,.45)"></span><span class="abs" style="left:28px;top:1.700px;font-size:6px;color:#f2f2f4;white-space:nowrap">2024_09_11</span></div><div class="abs" style="left:0;top:0;width:3.400px;height:32px;background:#3c3c40"></div><div class="abs" style="left:1.200px;top:9px;width:1px;height:9px;background:#e8e8e8"></div><div class="abs" style="right:0;top:0;width:3.600px;height:32px;background:#4a4a4e"></div><div class="abs" style="right:1.300px;top:9px;width:1px;height:9px;background:#c8c8c8"></div></div></div>
<div class="abs" style="left:81.5px;top:91.300px;width:394.5px;height:40px;border-radius:3px;overflow:hidden;background:#ccc9c5"><svg class="abs" style="left:0.00px;top:0" width="50.16" height="27.700" viewBox="4 4.400 178 97.900" preserveAspectRatio="xMidYMid slice"><use href="#oldman"/></svg><svg class="abs" style="left:49.86px;top:0" width="50.16" height="27.700" viewBox="4 4.400 178 97.900" preserveAspectRatio="xMidYMid slice"><use href="#oldman"/></svg><svg class="abs" style="left:99.72px;top:0" width="50.16" height="27.700" viewBox="4 4.400 178 97.900" preserveAspectRatio="xMidYMid slice"><use href="#oldman"/></svg><svg class="abs" style="left:149.58px;top:0" width="50.16" height="27.700" viewBox="4 4.400 178 97.900" preserveAspectRatio="xMidYMid slice"><use href="#oldman"/></svg><svg class="abs" style="left:199.44px;top:0" width="50.16" height="27.700" viewBox="4 4.400 178 97.900" preserveAspectRatio="xMidYMid slice"><use href="#oldman"/></svg><svg class="abs" style="left:249.30px;top:0" width="50.16" height="27.700" viewBox="4 4.400 178 97.900" preserveAspectRatio="xMidYMid slice"><use href="#oldman"/></svg><svg class="abs" style="left:299.16px;top:0" width="50.16" height="27.700" viewBox="4 4.400 178 97.900" preserveAspectRatio="xMidYMid slice"><use href="#oldman"/></svg><svg class="abs" style="left:349.02px;top:0" width="50.16" height="27.700" viewBox="4 4.400 178 97.900" preserveAspectRatio="xMidYMid slice"><use href="#oldman"/></svg><svg class="abs" style="left:0;top:27.700px" width="394.5" height="10" viewBox="0 0 394.5 10" preserveAspectRatio="none"><rect width="394.5" height="10" fill="#5a3ea6"/><path d="M0.0,10.0 L0.0,10.0 L1.1,10.0 L2.2,10.0 L3.3,10.0 L4.4,10.0 L5.5,10.0 L6.6,10.0 L7.7,10.0 L8.8,10.0 L9.9,10.0 L11.0,10.0 L12.1,10.0 L13.2,10.0 L14.3,10.0 L15.4,10.0 L16.5,10.0 L17.6,10.0 L18.7,10.0 L19.8,10.0 L20.9,10.0 L22.0,10.0 L23.1,10.0 L24.2,10.0 L25.3,10.0 L26.4,10.0 L27.5,4.5 L28.6,3.3 L29.7,2.9 L30.8,5.2 L31.9,3.8 L33.0,5.0 L34.1,4.6 L35.2,3.6 L36.3,5.6 L37.4,4.0 L38.5,5.7 L39.6,5.2 L40.7,5.0 L41.8,3.7 L42.9,6.3 L44.0,3.3 L45.1,3.5 L46.2,4.3 L47.3,4.1 L48.4,3.6 L49.5,4.8 L50.6,5.5 L51.7,6.5 L52.8,5.3 L53.9,6.1 L55.0,7.5 L56.1,6.4 L57.2,6.7 L58.3,7.6 L59.4,6.7 L60.5,3.8 L61.6,4.9 L62.7,5.8 L63.8,8.4 L64.9,5.6 L66.0,6.2 L67.1,4.8 L68.2,6.9 L69.3,5.6 L70.4,6.3 L71.5,5.3 L72.6,5.7 L73.7,7.5 L74.8,5.5 L75.9,5.7 L77.0,7.5 L78.1,8.0 L79.2,8.1 L80.3,5.1 L81.4,8.4 L82.5,5.9 L83.6,7.0 L84.7,5.0 L85.8,6.4 L86.9,5.8 L88.0,7.0 L89.1,7.4 L90.2,4.5 L91.3,4.7 L92.4,6.6 L93.5,6.0 L94.6,7.1 L95.7,4.9 L96.8,5.2 L97.9,4.4 L99.0,5.7 L100.1,6.4 L101.2,4.1 L102.3,4.3 L103.4,5.1 L104.5,6.1 L105.6,3.8 L106.7,4.3 L107.8,4.0 L108.9,3.5 L110.0,4.0 L111.1,5.0 L112.2,3.9 L113.3,3.5 L114.4,4.3 L115.5,5.4 L116.6,5.5 L117.7,5.2 L118.8,4.9 L119.9,5.7 L121.0,4.7 L122.1,4.9 L123.2,4.7 L124.3,2.9 L125.4,4.1 L126.5,3.9 L127.6,4.1 L128.7,3.1 L129.8,4.8 L130.9,3.6 L132.0,4.0 L133.1,3.0 L134.2,3.1 L135.3,5.8 L136.4,4.4 L137.5,4.9 L138.6,6.5 L139.7,6.0 L140.8,7.2 L141.9,7.4 L143.0,8.4 L144.1,7.4 L145.2,6.5 L146.3,5.8 L147.4,7.3 L148.5,7.3 L149.6,6.0 L150.7,10.0 L151.8,10.0 L152.9,10.0 L154.0,10.0 L155.1,10.0 L156.2,10.0 L157.3,10.0 L158.4,8.4 L159.5,8.0 L160.6,7.2 L161.7,5.1 L162.8,6.1 L163.9,4.8 L165.0,6.6 L166.1,5.1 L167.2,3.0 L168.3,4.6 L169.4,5.3 L170.5,4.4 L171.6,5.4 L172.7,2.9 L173.8,4.5 L174.9,5.5 L176.0,4.3 L177.1,2.6 L178.2,4.5 L179.3,3.8 L180.4,4.5 L181.5,3.8 L182.6,4.3 L183.7,4.6 L184.8,5.7 L185.9,3.6 L187.0,5.4 L188.1,4.7 L189.2,6.2 L190.3,6.9 L191.4,5.5 L192.5,4.7 L193.6,4.1 L194.7,5.0 L195.8,4.4 L196.9,4.3 L198.0,4.1 L199.1,4.7 L200.2,3.5 L201.3,5.5 L202.4,3.6 L203.5,3.9 L204.6,4.2 L205.7,4.9 L206.8,4.3 L207.9,3.5 L209.0,5.3 L210.1,5.2 L211.2,3.7 L212.3,4.6 L213.4,5.4 L214.5,4.8 L215.6,5.9 L216.7,4.7 L217.8,5.3 L218.9,5.3 L220.0,6.2 L221.1,4.5 L222.2,4.4 L223.3,5.1 L224.4,3.4 L225.5,5.8 L226.6,4.6 L227.7,2.4 L228.8,4.9 L229.9,3.0 L231.0,4.6 L232.1,6.1 L233.2,6.2 L234.3,6.0 L235.4,7.8 L236.5,5.6 L237.6,6.7 L238.7,6.3 L239.8,5.5 L240.9,5.0 L242.0,4.9 L243.1,5.8 L244.2,5.0 L245.3,5.7 L246.4,6.4 L247.5,6.2 L248.6,8.1 L249.7,7.4 L250.8,7.5 L251.9,5.6 L253.0,6.4 L254.1,8.1 L255.2,7.6 L256.3,6.1 L257.4,5.5 L258.5,6.3 L259.6,8.0 L260.7,5.6 L261.8,7.8 L262.9,5.2 L264.0,6.1 L265.1,10.0 L266.2,10.0 L267.3,10.0 L268.4,10.0 L269.5,10.0 L270.6,10.0 L271.7,10.0 L272.8,10.0 L273.9,10.0 L275.0,10.0 L276.1,5.3 L277.2,5.8 L278.3,5.6 L279.4,6.4 L280.5,4.2 L281.6,4.3 L282.7,3.7 L283.8,3.6 L284.9,4.1 L286.0,6.0 L287.1,6.6 L288.2,4.5 L289.3,5.4 L290.4,2.8 L291.5,4.0 L292.6,5.1 L293.7,5.6 L294.8,5.2 L295.9,5.1 L297.0,5.2 L298.1,5.9 L299.2,5.8 L300.3,5.4 L301.4,5.6 L302.5,6.0 L303.6,5.3 L304.7,6.5 L305.8,6.5 L306.9,7.6 L308.0,8.4 L309.1,8.3 L310.2,5.6 L311.3,7.6 L312.4,7.7 L313.5,5.9 L314.6,7.8 L315.7,5.3 L316.8,6.6 L317.9,6.9 L319.0,5.5 L320.1,7.8 L321.2,4.9 L322.3,6.8 L323.4,8.3 L324.5,6.2 L325.6,6.7 L326.7,7.2 L327.8,7.4 L328.9,6.8 L330.0,8.3 L331.1,5.6 L332.2,7.0 L333.3,6.9 L334.4,7.6 L335.5,6.9 L336.6,5.9 L337.7,6.3 L338.8,6.3 L339.9,6.2 L341.0,6.3 L342.1,5.0 L343.2,6.8 L344.3,6.8 L345.4,7.3 L346.5,6.2 L347.6,6.9 L348.7,8.3 L349.8,8.2 L350.9,6.8 L352.0,8.3 L353.1,8.0 L354.2,7.6 L355.3,8.2 L356.4,7.6 L357.5,6.3 L358.6,5.2 L359.7,5.0 L360.8,4.3 L361.9,3.6 L363.0,3.9 L364.1,4.1 L365.2,6.3 L366.3,7.1 L367.4,6.0 L368.5,8.3 L369.6,6.3 L370.7,8.3 L371.8,7.4 L372.9,4.9 L374.0,6.9 L375.1,6.6 L376.2,8.0 L377.3,5.4 L378.4,7.1 L379.5,6.8 L380.6,5.6 L381.7,3.7 L382.8,5.9 L383.9,4.6 L385.0,4.8 L386.1,2.8 L387.2,2.6 L388.3,5.0 L389.4,4.0 L390.5,3.3 L391.6,5.4 L392.7,4.5 L393.8,6.7 L394.5,10.0 Z" fill="#a492d6" transform="translate(0,1.600)"/></svg><div class="abs" style="left:2px;top:2.500px;width:64.500px;height:9px;border-radius:2px;background:rgba(66,66,68,.78)"><svg class="abs" style="left:4.300px;top:1.300px" width="6.600" height="6.400" viewBox="0 0 6.600 6.400"><rect width="6.600" height="6.400" rx="1.500" fill="#f2f2f2"/><path d="M2.500 1.900 L4.700 3.200 L2.500 4.500 Z" fill="#333"/></svg><span class="abs" style="left:13.500px;top:1.700px;font-size:6px;color:#f2f2f4;white-space:nowrap">0:01 2024_11_19</span></div></div>
<div class="abs" style="left:201px;top:7px;width:1.400px;height:49px;background:#96969c"></div><div class="abs" style="left:200.900px;top:55px;width:1.600px;height:73px;background:#d6d6da"></div>
<svg class="abs" style="left:195px;top:0;overflow:visible" width="14" height="32" viewBox="0 0 14 32"><path d="M3.900 1.400 C3.900 0.800 4.300 0.400 4.900 0.400 H8.700 C9.300 0.400 9.700 0.800 9.700 1.400 V5.600 L6.800 8.200 L3.900 5.600 Z" fill="#f4f4f6"/><rect x="1.400" y="13.300" width="12" height="17.800" rx="6" fill="#f6f6f8"/><g fill="none" stroke="#3a3a40" stroke-width="0.750"><circle cx="5.300" cy="26.200" r="1.500"/><circle cx="9.500" cy="26.200" r="1.500"/><path d="M6.100 25 L9.600 20 M8.700 25 L5.200 20"/><path d="M7.400 15.600 V18.800" stroke-dasharray="0.800 0.800" stroke="#a8a8ae"/></g></svg>
</div>

<!-- ================= RED ARROW ================= -->
<svg class="abs" style="left:0;top:0;width:696px;height:450px;pointer-events:none" viewBox="0 0 696 450">
  <polygon points="119.3,171.8 120.1,171.6 175.6,361.2 179.8,359.4 177.8,370.4 170.2,362.4 172.6,362.0" fill="#e3202b"/>
</svg>

</body>
</html>
